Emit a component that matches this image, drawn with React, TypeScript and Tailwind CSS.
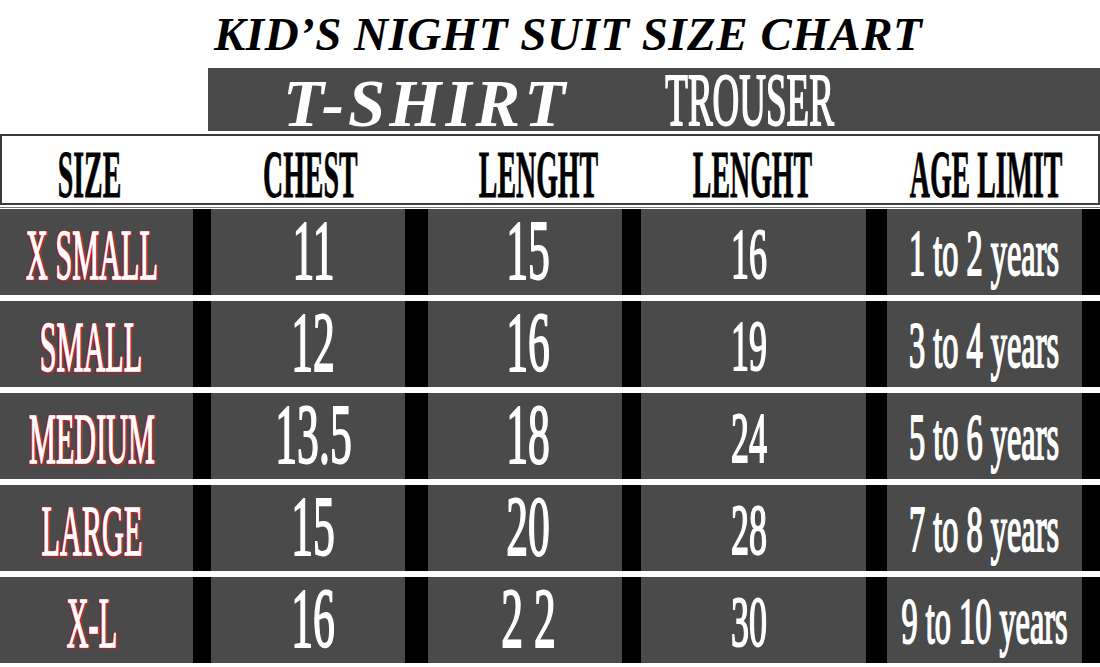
import React from "react";

const GRID =
  "grid grid-cols-[193px_18px_194px_23px_194px_19px_225px_21px_195px_18px]";

const rows = [
  ["X SMALL", "11", "15", "16", "1 to 2 years"],
  ["SMALL", "12", "16", "19", "3 to 4 years"],
  ["MEDIUM", "13.5", "18", "24", "5 to 6 years"],
  ["LARGE", "15", "20", "28", "7 to 8 years"],
  ["X-L", "16", "2 2", "30", "9 to 10 years"],
];

const serif = "font-['Liberation_Serif','Times_New_Roman',serif]";

function HeadCell({ text, className = "" }: { text: string; className?: string }) {
  return (
    <div className={`flex items-center justify-center pt-[4px] ${className}`}>
      <span
        className={`inline-block whitespace-nowrap ${serif} font-bold text-[68px] leading-none text-black scale-x-[0.41] [-webkit-text-stroke:0.8px_#000]`}
      >
        {text}
      </span>
    </div>
  );
}

function Row({ r }: { r: string[] }) {
  const cell = "bg-[#4a4a4a] flex items-center justify-center overflow-visible";
  const sep = "bg-black";
  const num = `inline-block whitespace-nowrap ${serif} leading-none text-white [-webkit-text-stroke:2px_#fff]`;
  return (
    <div className={`${GRID} h-[83px]`}>
      <div className={`${cell} pr-[10px] pt-[6px]`}>
        <span
          className={`inline-block whitespace-nowrap ${serif} text-[72px] leading-none text-white scale-x-[0.42] [-webkit-text-stroke:1.5px_#fff] [text-shadow:3px_0_#b3222a,-3px_0_#b3222a,0_1.5px_#b3222a,0_-1.5px_#b3222a,3px_1.5px_#b3222a,-3px_-1.5px_#b3222a,3px_-1.5px_#b3222a,-3px_1.5px_#b3222a]`}
        >
          {r[0]}
        </span>
      </div>
      <div className={sep} />
      <div className={`${cell} pl-[10px] pb-[2px]`}>
        <span className={`${num} text-[84px] scale-x-[0.52]`}>{r[1]}</span>
      </div>
      <div className={sep} />
      <div className={`${cell} pl-[6px] pb-[2px]`}>
        <span className={`${num} text-[84px] scale-x-[0.52]`}>{r[2]}</span>
      </div>
      <div className={sep} />
      <div className={`${cell} pt-[4px] pr-[10px]`}>
        <span className={`${num} text-[72px] scale-x-[0.5] [-webkit-text-stroke:1.5px_#fff]`}>{r[3]}</span>
      </div>
      <div className={sep} />
      <div className={`${cell} pt-[2px]`}>
        <span className={`${num} text-[66px] scale-x-[0.49] [-webkit-text-stroke:1.2px_#fff]`}>{r[4]}</span>
      </div>
      <div className={sep} />
    </div>
  );
}

export default function App() {
  return (
    <div className="w-[1100px] h-[667px] bg-white overflow-hidden flex flex-col">
      {/* Title */}
      <div className="h-[68px] flex items-center pl-[214px]">
        <span
          className={`${serif} font-bold italic text-[47px] leading-none tracking-[0.5px] text-black whitespace-nowrap`}
        >
          KID’S NIGHT SUIT SIZE CHART
        </span>
      </div>

      {/* Band */}
      <div className="ml-[208px] h-[63px] bg-[#4a4a4a] flex items-center">
        <span
          className={`ml-[75px] mt-[8px] ${serif} font-bold italic text-[67px] leading-none tracking-[4px] text-white whitespace-nowrap`}
        >
          T-SHIRT
        </span>
        <div className="ml-[90px] w-[180px] flex justify-center">
          <span
            className={`inline-block whitespace-nowrap ${serif} text-[74px] leading-none text-white scale-x-[0.5] [-webkit-text-stroke:2px_#fff]`}
          >
            TROUSER
          </span>
        </div>
      </div>

      {/* Header box */}
      <div className="mt-[3px] h-[74px] border-b border-[#777] pb-[2px]">
        <div className={`${GRID} h-[71px] border-2 border-[#3c3c3c] bg-white box-border`}>
          <HeadCell text="SIZE" className="pr-[18px]" />
          <div />
          <HeadCell text="CHEST" />
          <div />
          <HeadCell text="LENGHT" className="pl-[22px]" />
          <div />
          <HeadCell text="LENGHT" className="pr-[6px]" />
          <div />
          <HeadCell text="AGE LIMIT" />
          <div />
        </div>
      </div>

      {/* Rows */}
      <div className="mt-[1px] flex flex-col gap-[9px]">
        {rows.map((r, i) => (
          <Row key={i} r={r} />
        ))}
      </div>
    </div>
  );
}
